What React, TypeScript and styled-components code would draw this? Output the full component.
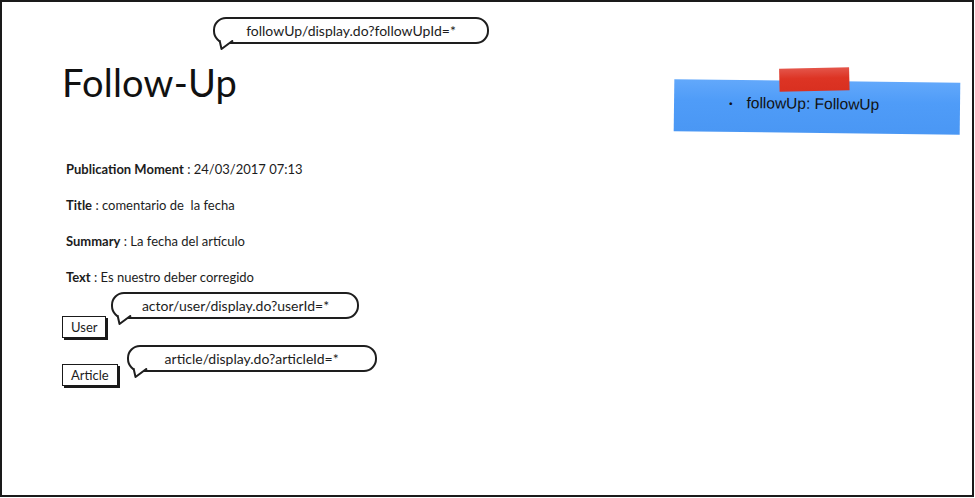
import React from "react";
import styled, { createGlobalStyle } from "styled-components";

const GlobalStyle = createGlobalStyle`
    html, body {
        margin: 0;
        padding: 0;
        background: #ffffff;
    }
    body {
        font-family: "Lato", "Open Sans", sans-serif;
        color: #1c1c1c;
    }
`;

const Frame = styled.div`
    box-sizing: border-box;
    width: 974px;
    height: 497px;
    border: 2px solid #1a1a1a;
    background: #ffffff;
    display: flex;
    flex-direction: column;
    padding: 15px 12px 0 60px;
`;

const Header = styled.div`
    display: flex;
    justify-content: space-between;
    align-items: flex-start;
`;

const TitleColumn = styled.div`
    display: flex;
    flex-direction: column;
    align-items: flex-start;
`;

const BubbleSlot = styled.div<{ $offset: number }>`
    margin-left: ${(p) => p.$offset}px;
`;

const Bubble = styled.div<{ $width: number }>`
    position: relative;
    box-sizing: border-box;
    width: ${(p) => p.$width}px;
    height: 27px;
    border: 2px solid #1e1e1e;
    border-radius: 13px;
    background: #ffffff;
    display: flex;
    align-items: center;
    justify-content: center;
    font-family: "Lato", "Open Sans", sans-serif;
    font-size: 14px;
    color: #1c1c1c;
    white-space: nowrap;
`;

const Tail = styled.svg`
    position: absolute;
    left: 2px;
    bottom: -9px;
`;

const Title = styled.h1`
    margin: 16px 0 0 0;
    font-family: "Lato", "Open Sans", sans-serif;
    font-weight: 400;
    font-size: 38px;
    line-height: 44px;
    color: #111111;
    letter-spacing: 0.2px;
`;

const Sticky = styled.div`
    position: relative;
    margin-top: 64px;
    width: 286px;
    height: 52px;
    background: linear-gradient(180deg, #62a8fb 0%, #4f9cf8 40%, #4a97f4 100%);
    transform: rotate(0.7deg);
    display: flex;
    align-items: center;
    padding: 0 0 6px 55px;
    box-sizing: border-box;
    font-family: "Liberation Sans", Arial, sans-serif;
    font-size: 15.5px;
    color: #111111;
`;

const Tape = styled.div`
    position: absolute;
    left: 105px;
    top: -13px;
    width: 70px;
    height: 23px;
    background: linear-gradient(180deg, #e4554a 0%, #dd3424 45%, #d93020 100%);
    transform: rotate(-2deg);
`;

const Bullet = styled.span`
    font-size: 10px;
    margin-right: 14px;
`;

const Fields = styled.div`
    display: flex;
    flex-direction: column;
    margin: 18px 0 0 4px;
`;

const Field = styled.div`
    height: 36px;
    display: flex;
    align-items: center;
    font-size: 13px;
    white-space: pre;
`;

const Label = styled.span`
    font-weight: 700;
`;

const LinkRow = styled.div<{ $gap: number; $lift: number; $top: number }>`
    display: flex;
    align-items: flex-end;
    gap: ${(p) => p.$gap}px;
    margin-top: ${(p) => p.$top}px;

    & > ${BubbleSlot} {
        margin-bottom: ${(p) => p.$lift}px;
    }
`;

const Button = styled.div`
    box-sizing: border-box;
    height: 22px;
    padding: 0 8px;
    border: 1.5px solid #1a1a1a;
    box-shadow: 2px 2px 0 #1a1a1a;
    background: #ffffff;
    display: flex;
    align-items: center;
    font-size: 13px;
    color: #1c1c1c;
`;

function Callout({ text, width }: { text: string; width: number }) {
    return (
        <Bubble $width={width}>
            {text}
            <Tail width="20" height="11" viewBox="0 0 20 11">
                <path d="M2 0 L4 9 L16 0 Z" fill="#ffffff" />
                <path d="M2.5 0 L4.5 9 L16 0.5" fill="none" stroke="#1e1e1e" strokeWidth="2" strokeLinejoin="round" />
            </Tail>
        </Bubble>
    );
}

export default function App() {
    return (
        <>
            <GlobalStyle />
            <Frame>
                <Header>
                    <TitleColumn>
                        <BubbleSlot $offset={151}>
                            <Callout text="followUp/display.do?followUpId=*" width={276} />
                        </BubbleSlot>
                        <Title>Follow-Up</Title>
                    </TitleColumn>
                    <Sticky>
                        <Tape />
                        <Bullet>•</Bullet>
                        followUp: FollowUp
                    </Sticky>
                </Header>
                <Fields>
                    <Field>
                        <Label>Publication Moment</Label> : 24/03/2017 07:13
                    </Field>
                    <Field>
                        <Label>Title</Label> : comentario de  la fecha
                    </Field>
                    <Field>
                        <Label>Summary</Label> : La fecha del artículo
                    </Field>
                    <Field>
                        <Label>Text</Label> : Es nuestro deber corregido
                    </Field>
                </Fields>
                <LinkRow $gap={5} $lift={19} $top={-3}>
                    <Button>User</Button>
                    <BubbleSlot $offset={0}>
                        <Callout text="actor/user/display.do?userId=*" width={248} />
                    </BubbleSlot>
                </LinkRow>
                <LinkRow $gap={9} $lift={14} $top={7}>
                    <Button>Article</Button>
                    <BubbleSlot $offset={0}>
                        <Callout text="article/display.do?articleId=*" width={250} />
                    </BubbleSlot>
                </LinkRow>
            </Frame>
        </>
    );
}
